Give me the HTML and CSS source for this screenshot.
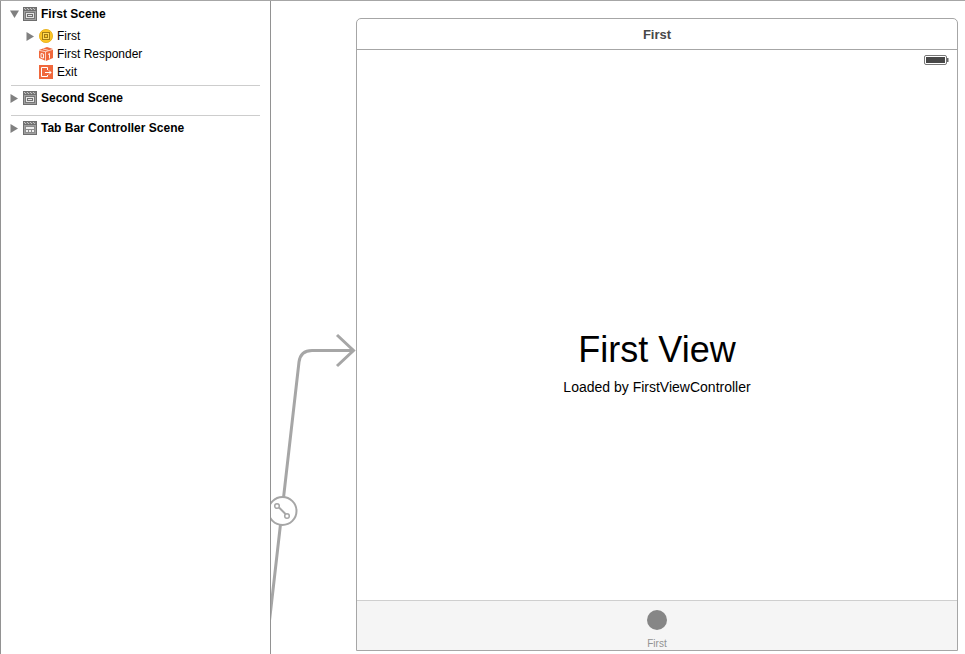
FILE: index.html
```html
<!DOCTYPE html>
<html lang="en">
<head>
<meta charset="utf-8">
<title>Storyboard</title>
<link rel="stylesheet" href="styles.css">
</head>
<body>
<svg class="defs" aria-hidden="true">
  <symbol id="clapper" viewBox="0 0 14 14">
    <rect width="14" height="14" fill="#6e6e6e"/>
    <rect x="1" y="1" width="12" height="2" fill="#7c7c7c"/>
    <path d="M1 1h1v1h1v1H2V2H1zM4 1h1v1h1v1H5V2H4zM7 1h1v1h1v1H8V2H7zM10 1h1v1h1v1h-1V2h-1z" fill="#c4c4c4"/>
    <rect x="1" y="4" width="12" height="9" fill="#8c8c8c"/>
    <rect x="1.500" y="4.500" width="11" height="8" fill="none" stroke="#a0a0a0"/>
  </symbol>
  <symbol id="scene" viewBox="0 0 14 14">
    <use href="#clapper"/>
    <rect x="2.500" y="5.500" width="9" height="6" fill="none" stroke="#777"/>
    <rect x="3.500" y="6.500" width="7" height="4" fill="#707070" stroke="#e4e4e4"/>
    <rect x="5" y="8" width="4" height="1" fill="#e4e4e4"/>
  </symbol>
  <symbol id="tab-scene" viewBox="0 0 14 14">
    <use href="#clapper"/>
    <path d="M3 6h8v2H3zM3 9h2v2H3zM6 9h2v2H6zM9 9h2v2H9z" fill="#eee"/>
  </symbol>
</svg>
<div class="editor">
  <nav class="outline" aria-label="Document outline">
    <section class="scene scene-open">
      <div class="row row-scene">
        <button class="twisty" aria-label="Collapse First Scene"><svg width="9" height="8"><path d="M0 0.500h9L4.500 8z" fill="#808080"/></svg></button>
        <svg class="icon" width="14" height="14"><use href="#scene"/></svg>
        <span>First Scene</span>
      </div>
      <ul class="children">
        <li class="row">
          <button class="twisty" aria-label="Expand First"><svg width="8" height="9"><path d="M0.500 0v9L8 4.500z" fill="#808080"/></svg></button>
          <svg class="icon" width="14" height="14" viewBox="0 0 14 14"><circle cx="7" cy="7" r="6.600" fill="#fcc527" stroke="#e6ac12" stroke-width="0.800"/><rect x="3.500" y="3.500" width="7" height="7" fill="#ffda59" stroke="#a37c14"/><rect x="5.500" y="5.500" width="3" height="3" fill="#fcc527" stroke="#a37c14"/></svg>
          <span>First</span>
        </li>
        <li class="row row-leaf">
          <svg class="icon" width="14" height="14" viewBox="0 0 14 14"><path d="M0 3L8 0l6 2v9l-7 3-7-3z" fill="#f0683c"/><path d="M0 3.300l6.500 1.400L14 2.300M6.500 4.700V14M4 2l5.500 1.300" fill="none" stroke="#fff" stroke-width="0.700"/><path d="M2 6.500l2.500.6v4L2 10.500zM9 7.500l1.500-1v5" fill="none" stroke="#fff" stroke-width="0.900"/></svg>
          <span>First Responder</span>
        </li>
        <li class="row row-leaf">
          <svg class="icon" width="14" height="14" viewBox="0 0 14 14"><rect width="14" height="14" fill="#f0683c"/><path d="M8.500 5V2.500h-6v9h6V10M6 7.500h6M10 5.500l2 2-2 2" fill="none" stroke="#fff"/></svg>
          <span>Exit</span>
        </li>
      </ul>
    </section>
    <section class="scene">
      <div class="row row-scene">
        <button class="twisty" aria-label="Expand Second Scene"><svg width="8" height="9"><path d="M0.500 0v9L8 4.500z" fill="#808080"/></svg></button>
        <svg class="icon" width="14" height="14"><use href="#scene"/></svg>
        <span>Second Scene</span>
      </div>
    </section>
    <section class="scene">
      <div class="row row-scene">
        <button class="twisty" aria-label="Expand Tab Bar Controller Scene"><svg width="8" height="9"><path d="M0.500 0v9L8 4.500z" fill="#808080"/></svg></button>
        <svg class="icon" width="14" height="14"><use href="#tab-scene"/></svg>
        <span>Tab Bar Controller Scene</span>
      </div>
    </section>
  </nav>
  <main class="canvas">
    <svg class="segue" width="86" height="300" viewBox="0 0 86 300" fill="none" stroke="#a6a6a6" aria-hidden="true">
      <path d="M-2 295L28 32Q29.500 20.500 41 20.500H82" stroke-width="3"/>
      <path d="M66 5l16.500 15.500L66 36" stroke-width="3"/>
      <circle cx="11.500" cy="181" r="14" fill="#fff" stroke-width="2"/>
      <path d="M8 177.500l6.500 6.500" stroke-width="2"/>
      <circle cx="6" cy="176" r="2.300" stroke-width="1.500"/>
      <circle cx="16" cy="186" r="2.300" stroke-width="1.500"/>
    </svg>
    <article class="device">
      <header class="title">First</header>
      <div class="status">
        <svg width="25" height="10" viewBox="0 0 25 10" role="img" aria-label="Battery full"><rect x="0.500" y="0.500" width="22" height="9" rx="1.500" fill="#fff" stroke="#777"/><rect x="2" y="2" width="19" height="6" fill="#484848"/><path d="M23 3h1.500v4H23z" fill="#666"/></svg>
      </div>
      <div class="view">
        <h1>First View</h1>
        <p>Loaded by FirstViewController</p>
      </div>
      <footer class="tabs">
        <button class="tab"><span class="dot"></span>First</button>
      </footer>
    </article>
  </main>
</div>
</body>
</html>
```
FILE: styles.css
```css
* { box-sizing: border-box; }

body {
  margin: 0;
  background: #fff;
  color: #000;
  font-family: "Liberation Sans", Arial, sans-serif;
}

button {
  padding: 0;
  border: 0;
  background: none;
  font: inherit;
  color: inherit;
}

.defs { display: none; }

.editor {
  display: grid;
  grid-template-columns: 271px 1fr;
  min-height: 100vh;
  border-top: 1px solid #a6a6a6;
}

.outline {
  padding: 0 10px;
  border: solid #929292;
  border-width: 0 1px;
  font-size: 12px;
  line-height: 18px;
}

.scene { padding: 3px 0 8px; }
.scene-open { padding: 4px 0; }
.scene + .scene { border-top: 1px solid #cdcdcd; }

.row {
  display: flex;
  align-items: center;
  gap: 4px;
  height: 18px;
  white-space: nowrap;
}

.row-scene { font-weight: bold; }

.twisty {
  display: flex;
  justify-content: center;
  width: 8px;
  margin-right: 1px;
}

.twisty svg { flex: none; }

.icon { flex: none; }

.row-scene,
.children { margin-left: -1px; }

.children {
  margin-top: 4px;
  margin-bottom: 0;
  padding: 0 0 0 16px;
  list-style: none;
}

.row-leaf { padding-left: 13px; }

.canvas {
  position: relative;
  display: flex;
  padding: 17px 7px 3px 85px;
  overflow: hidden;
}

.segue {
  position: absolute;
  left: 0;
  top: 329px;
}

.device {
  flex: 1;
  display: flex;
  flex-direction: column;
  border: 1px solid #a6a6a6;
  border-radius: 5px 5px 0 0;
}

.title {
  height: 31px;
  border-bottom: 1px solid #a6a6a6;
  color: #484848;
  font-size: 13px;
  font-weight: bold;
  line-height: 31px;
  text-align: center;
}

.status {
  display: flex;
  align-items: center;
  justify-content: flex-end;
  height: 20px;
  padding-right: 8px;
}

.view {
  flex: 1;
  display: flex;
  flex-direction: column;
  align-items: center;
  justify-content: center;
  padding-top: 54px;
}

.view h1 {
  margin: 0;
  font-size: 36px;
  font-weight: normal;
  line-height: 44px;
}

.view p {
  margin: 6px 0 0;
  font-size: 14px;
  line-height: 18px;
}

.tabs {
  display: flex;
  justify-content: center;
  height: 50px;
  border-top: 1px solid #cfcfcf;
  background: #f5f5f5;
}

.tab {
  display: flex;
  flex-direction: column;
  align-items: center;
  gap: 8px;
  padding-top: 9px;
  color: #929292;
  font-size: 10px;
  line-height: 12px;
}

.dot {
  width: 20px;
  height: 20px;
  border-radius: 50%;
  background: #868686;
}
```
